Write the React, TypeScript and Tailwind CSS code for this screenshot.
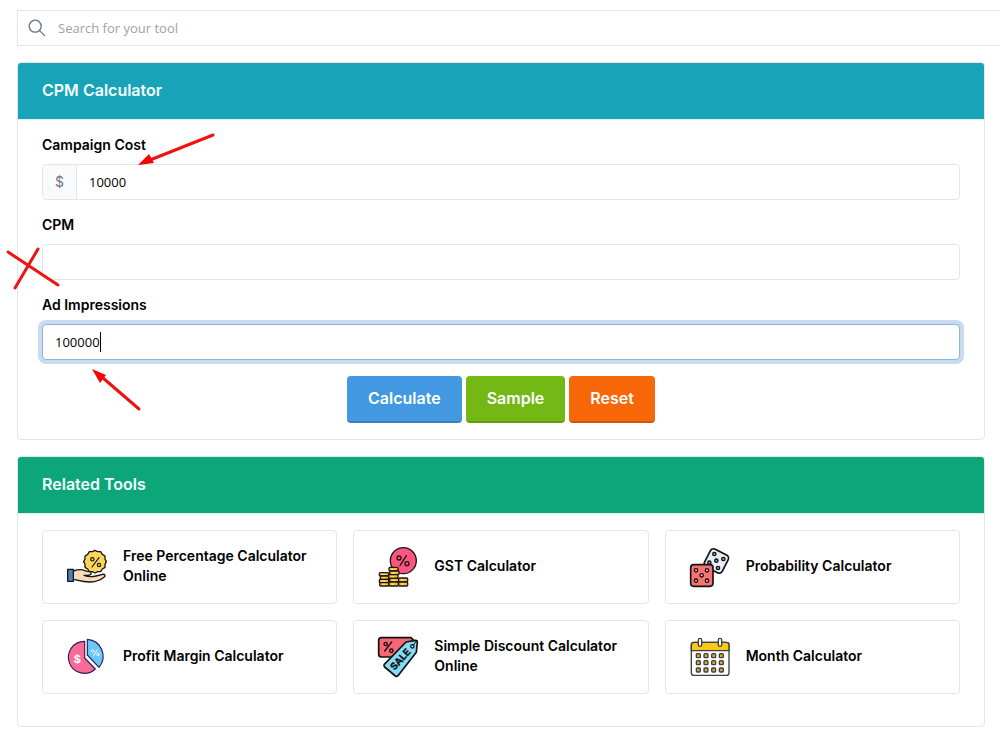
import type { ReactNode } from "react";

const field =
  "h-9 w-full min-w-0 bg-white px-3 font-['Open_Sans','Noto_Sans',sans-serif] text-[13px] text-black outline-none";

function Panel({ title, tone, children }: { title: string; tone: string; children: ReactNode }) {
  return (
    <section className="overflow-hidden rounded border border-[#e3e5e8]">
      <h2 className={`flex h-[57px] items-center border-b border-[#d8f3f0] px-6 pb-0.5 text-base font-semibold text-[#f2ffff] ${tone}`}>
        {title}
      </h2>
      <div className="px-6 py-4">{children}</div>
    </section>
  );
}

function Label({ htmlFor, children }: { htmlFor: string; children: ReactNode }) {
  return (
    <label htmlFor={htmlFor} className="mb-2.5 block text-sm leading-[18px] font-semibold text-black">
      {children}
    </label>
  );
}

function HandIcon() {
  return (
    <svg viewBox="33 21 120 120" className="size-10 shrink-0 overflow-visible" fill="none" stroke="#161616" strokeWidth="4" strokeLinejoin="round" strokeLinecap="round" aria-hidden="true">
      <path fill="#fdd557" d="M117 31l8 4 9 0 5 8 8 5 0 9 4 8-4 8 0 9-8 5-5 8-9 0-8 4-8-4-9 0-5-8-8-5 0-9-4-8 4-8 0-9 8-5 5-8 9 0z" />
      <path strokeWidth="3.5" d="M129 53l-21 28" />
      <circle cx="109" cy="58" r="5" strokeWidth="3.5" />
      <circle cx="129" cy="75" r="5" strokeWidth="3.5" />
      <path fill="#fbdcb8" d="M52 93c9-3 15-5 23-4 9 1 14 5 20 5 7 0 12 3 10 8-1 3-5 4-12 4h-9c13 5 24 5 36 2l20-5c6-1 10 4 5 8-11 9-24 14-41 15-20 1-34-4-52-8z" />
      <path fill="#4d82bd" d="M35 88h17v36H35z" />
    </svg>
  );
}

function CoinsIcon() {
  return (
    <svg viewBox="30 21 120 120" className="size-10 shrink-0 overflow-visible" fill="none" stroke="#201611" strokeWidth="4" strokeLinejoin="round" strokeLinecap="round" aria-hidden="true">
      <circle cx="106" cy="62" r="39" fill="#fb5580" />
      <path strokeWidth="4" d="M115 47L96 77" />
      <circle cx="93" cy="54" r="6" />
      <circle cx="117" cy="71" r="6" />
      <g fill="#f0bd38">
        <rect x="34" y="98" width="28" height="10" rx="3" />
        <rect x="37" y="108" width="26" height="10" rx="3" />
        <rect x="34" y="118" width="28" height="10" rx="3" />
        <rect x="35" y="128" width="28" height="10" rx="3" />
        <rect x="63" y="82" width="27" height="11" rx="3" />
        <rect x="65" y="93" width="28" height="11" rx="3" />
        <rect x="62" y="104" width="28" height="11" rx="3" />
        <rect x="65" y="115" width="28" height="11" rx="3" />
        <rect x="63" y="126" width="28" height="12" rx="3" />
        <rect x="92" y="114" width="27" height="12" rx="3" />
        <rect x="92" y="126" width="27" height="12" rx="3" />
      </g>
      <path stroke="#ffe89a" strokeWidth="3" d="M42 103h7M44 113h7M43 123h7M44 133h7M71 88h7M74 99h7M70 110h7M74 121h7M71 132h7M100 120h7M100 132h7" />
    </svg>
  );
}

function DiceIcon() {
  return (
    <svg viewBox="30 21 120 120" className="size-10 shrink-0 overflow-visible" fill="none" stroke="#111" strokeWidth="5" strokeLinejoin="round" strokeLinecap="round" aria-hidden="true">
      <rect x="79" y="33" width="60" height="60" rx="11" fill="#e5edf5" transform="rotate(27 109 63)" />
      <g fill="#7fa6c6" strokeWidth="4">
        <circle cx="103" cy="42" r="5" />
        <circle cx="130" cy="57" r="5" />
        <circle cx="109" cy="62" r="5" />
        <circle cx="88" cy="68" r="5" />
        <circle cx="114" cy="84" r="5" />
      </g>
      <rect x="32" y="74" width="67" height="65" rx="9" fill="#fa7373" />
      <g fill="#ffc9c9" strokeWidth="4">
        <circle cx="48" cy="91" r="5" />
        <circle cx="81" cy="91" r="5" />
        <circle cx="65" cy="106" r="5" />
        <circle cx="48" cy="122" r="5" />
        <circle cx="81" cy="122" r="5" />
      </g>
    </svg>
  );
}

function PieIcon() {
  return (
    <svg viewBox="33 21 120 120" className="size-10 shrink-0 overflow-visible" fill="none" stroke="#2c2151" strokeWidth="3.5" strokeLinejoin="round" aria-hidden="true">
      <path fill="#fb6b99" d="M86 34A48 48 0 1 0 118 117L86 84z" />
      <path fill="#69c7fa" d="M94 28A51 51 0 0 1 129 112L94 75z" />
      <text x="64" y="98" fill="#fff" stroke="none" fontSize="33" fontWeight="700" textAnchor="middle">$</text>
      <g stroke="#e8faff" strokeWidth="3" strokeLinecap="round">
        <path d="M124 59l-11 19" />
        <circle cx="110" cy="63" r="4" />
        <circle cx="126" cy="73" r="4" />
      </g>
    </svg>
  );
}

function SaleIcon() {
  return (
    <svg viewBox="30 21 120 120" className="size-10 shrink-0 overflow-visible" fill="none" stroke="#111" strokeWidth="5" strokeLinejoin="round" strokeLinecap="round" aria-hidden="true">
      <path fill="#fa6673" d="M40 23h89l12 12v34L82 81H40q-8 0-8-8V31q0-8 8-8z" />
      <path strokeWidth="4" d="M71 36L50 63" />
      <circle cx="53" cy="42" r="5" strokeWidth="4" />
      <circle cx="70" cy="62" r="5" strokeWidth="4" />
      <path fill="#84dcf5" d="M114 36l29-5q5 0 5 5l-3 31-55 70q-4 4-8 1L50 111q-4-4-1-8z" />
      <circle cx="133" cy="49" r="5" fill="#fff" strokeWidth="4" />
      <path strokeWidth="3" d="M135 47l11-15" />
      <text x="97" y="98" fill="#111" stroke="#111" strokeWidth="1" fontSize="29" fontWeight="700" textAnchor="middle" transform="rotate(-48 97 88)">SALE</text>
    </svg>
  );
}

const calendarCells = [77, 98, 120].flatMap((y) => [55, 78, 101, 124].map((x) => ({ x, y })));

function CalendarIcon() {
  return (
    <svg viewBox="30 21 120 120" className="size-10 shrink-0 overflow-visible" fill="none" stroke="#3d3f43" strokeWidth="4" strokeLinejoin="round" aria-hidden="true">
      <rect x="34" y="37" width="113" height="99" rx="8" fill="#fff" />
      <path fill="#fbc817" d="M34 62V45q0-8 8-8h97q8 0 8 8v17z" />
      <rect x="55" y="25" width="10" height="24" rx="5" fill="#fff" />
      <rect x="115" y="25" width="10" height="24" rx="5" fill="#fff" />
      {calendarCells.map(({ x, y }) => (
        <rect key={`${x}-${y}`} x={x - 6} y={y - 6} width="12" height="12" rx="3" fill="#cfa63c" />
      ))}
    </svg>
  );
}

const tools = [
  { name: "Free Percentage Calculator Online", icon: <HandIcon /> },
  { name: "GST Calculator", icon: <CoinsIcon /> },
  { name: "Probability Calculator", icon: <DiceIcon /> },
  { name: "Profit Margin Calculator", icon: <PieIcon /> },
  { name: "Simple Discount Calculator Online", icon: <SaleIcon /> },
  { name: "Month Calculator", icon: <CalendarIcon /> },
];

const button =
  "h-[47px] rounded border-b-2 border-black/15 px-[21px] pb-0.5 text-base font-semibold text-white";

export default function App() {
  return (
    <main className="relative overflow-x-hidden bg-white pt-2.5 pr-[15px] pb-3 pl-[17px] font-[Inter,Roboto,sans-serif]">
      <div className="-mr-[15px] mb-4 flex h-9 items-center border border-r-0 border-[#e3e5e8]">
        <svg viewBox="0 0 18 18" className="ml-2.5 size-[18px] shrink-0" fill="none" stroke="#667085" strokeWidth="1.3" strokeLinecap="round" aria-hidden="true">
          <circle cx="7.2" cy="7.2" r="6" />
          <path d="M11.6 11.6l5 5" />
        </svg>
        <input
          type="search"
          aria-label="Search for your tool"
          placeholder="Search for your tool"
          className="ml-3 h-full min-w-0 flex-1 bg-transparent font-['Open_Sans','Noto_Sans',sans-serif] text-[13px] outline-none placeholder:text-[#9da1aa]"
        />
      </div>

      <div className="flex flex-col gap-4">
        <Panel title="CPM Calculator" tone="bg-[#19a3b9]">
          <form className="flex flex-col gap-4" onSubmit={(e) => e.preventDefault()}>
            <div>
              <Label htmlFor="cost">Campaign Cost</Label>
              <div className="flex h-9 overflow-hidden rounded border border-[#e3e5e8]">
                <span className="flex w-[34px] shrink-0 items-center justify-center border-r border-[#e3e5e8] bg-[#f9fafc] text-sm text-[#6e7687]">$</span>
                <input id="cost" defaultValue="10000" className={`${field} h-full`} />
              </div>
            </div>
            <div>
              <Label htmlFor="cpm">CPM</Label>
              <input id="cpm" className={`${field} block rounded border border-[#e3e5e8]`} />
            </div>
            <div>
              <Label htmlFor="impressions">Ad Impressions</Label>
              <div className="relative">
                <input
                  id="impressions"
                  defaultValue="100000"
                  className={`${field} block rounded border border-[#8eb3dc] ring-4 ring-[#c9dbef]`}
                />
                <span className="absolute top-2 left-[58px] h-5 w-px bg-black" />
              </div>
            </div>
            <div className="flex justify-center gap-1">
              <button type="submit" className={`${button} bg-[#4299e1]`}>Calculate</button>
              <button type="button" className={`${button} bg-[#74b816]`}>Sample</button>
              <button type="reset" className={`${button} bg-[#f76707]`}>Reset</button>
            </div>
          </form>
        </Panel>

        <Panel title="Related Tools" tone="bg-[#0ca678]">
          <ul className="mb-4 grid grid-cols-3 gap-4">
            {tools.map((tool) => (
              <li key={tool.name}>
                <a href="#" className="flex h-[74px] items-center gap-4 rounded border border-[#e3e5e8] px-6 text-sm leading-5 font-semibold text-black">
                  {tool.icon}
                  <span className="pb-0.5">{tool.name}</span>
                </a>
              </li>
            ))}
          </ul>
        </Panel>
      </div>

      <svg viewBox="0 0 220 420" className="pointer-events-none absolute top-0 left-0 h-[420px] w-[220px]" stroke="#ee1212" strokeWidth="3" strokeLinecap="round" fill="#fb0000" aria-hidden="true">
        <path d="M213 135L150 160" />
        <path stroke="none" d="M138 165l11-11 5 9z" />
        <path d="M8 252l50 33M38 249l-23 39" />
        <path d="M139 409l-36-31" />
        <path stroke="none" d="M92 369l14 6-6 8z" />
      </svg>
    </main>
  );
}
